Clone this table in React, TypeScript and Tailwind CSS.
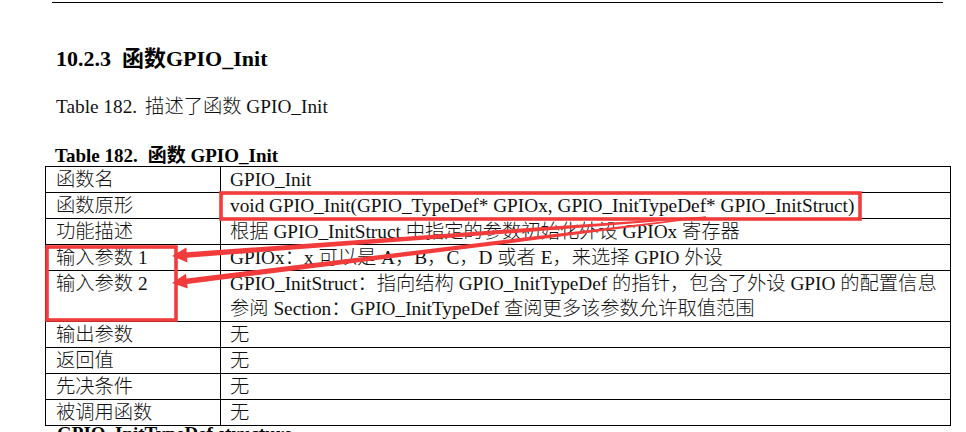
import React from 'react';

type Row = { name: string; value: React.ReactNode };

const rows: Row[] = [
  { name: '函数名', value: 'GPIO_Init' },
  { name: '函数原形', value: 'void GPIO_Init(GPIO_TypeDef* GPIOx, GPIO_InitTypeDef* GPIO_InitStruct)' },
  { name: '功能描述', value: '根据 GPIO_InitStruct 中指定的参数初始化外设 GPIOx 寄存器' },
  { name: '输入参数 1', value: 'GPIOx：x 可以是 A，B，C，D 或者 E，来选择 GPIO 外设' },
  {
    name: '输入参数 2',
    value: (
      <>
        GPIO_InitStruct：指向结构 GPIO_InitTypeDef 的指针，包含了外设 GPIO 的配置信息
        <br />
        参阅 Section：GPIO_InitTypeDef 查阅更多该参数允许取值范围
      </>
    ),
  },
  { name: '输出参数', value: '无' },
  { name: '返回值', value: '无' },
  { name: '先决条件', value: '无' },
  { name: '被调用函数', value: '无' },
];

// tapered arrow: thick near the head, thin at the tail
function arrowPoints(tx: number, ty: number, hx: number, hy: number) {
  const dx = hx - tx;
  const dy = hy - ty;
  const len = Math.hypot(dx, dy);
  const ux = dx / len;
  const uy = dy / len;
  const nx = -uy;
  const ny = ux;
  const headLen = 15;
  const headW = 15;
  const bx = hx - ux * headLen;
  const by = hy - uy * headLen;
  const stops: [number, number][] = [
    [0, 0.8],
    [0.35, 3.8],
    [1, 5.5],
  ];
  const along = (t: number): [number, number] => [tx + (bx - tx) * t, ty + (by - ty) * t];
  const left: string[] = [];
  const right: string[] = [];
  stops.forEach(([t, w]) => {
    const [px, py] = along(t);
    left.push(`${px + (nx * w) / 2},${py + (ny * w) / 2}`);
    right.unshift(`${px - (nx * w) / 2},${py - (ny * w) / 2}`);
  });
  const head = [
    `${bx + (nx * headW) / 2},${by + (ny * headW) / 2}`,
    `${hx},${hy}`,
    `${bx - (nx * headW) / 2},${by - (ny * headW) / 2}`,
  ];
  return [...left, ...head, ...right].join(' ');
}

const RED = '#f23b3b';

const App: React.FC = () => {
  return (
    <div className="relative w-[966px] h-[432px] overflow-hidden bg-white text-black font-['Liberation_Serif','Noto_Sans_CJK_SC',serif]">
      <div className="mt-[2px] ml-[52px] w-[891px] h-px bg-black" />

      <h2 className="mt-[45px] ml-[56px] text-[22px] leading-[22px] font-bold whitespace-nowrap">
        10.2.3<span className="ml-[11px]">函数GPIO_Init</span>
      </h2>

      <p className="mt-[27px] ml-[56px] text-[19.3px] leading-[19px] font-light text-[#111] whitespace-nowrap">
        Table 182.<span className="ml-[8px]">描述了函数 GPIO_Init</span>
      </p>

      <p className="mt-[30px] ml-[55px] text-[19px] leading-[19px] font-bold whitespace-nowrap">
        Table 182.<span className="ml-[10px]">函数 GPIO_Init</span>
      </p>

      <div className="mt-px ml-[45px] w-[906px] border-t border-l border-r border-black text-[19.3px] leading-[25px] font-light text-[#111]">
        {rows.map((row) => (
          <div key={row.name} className="flex border-b border-black">
            <div className="w-[175px] shrink-0 border-r border-black pl-[10px] whitespace-nowrap">{row.name}</div>
            <div className="flex-1 pl-[9px] whitespace-nowrap">{row.value}</div>
          </div>
        ))}
      </div>

      <p className="ml-[57px] text-[19px] leading-[15px] font-bold whitespace-nowrap">GPIO_InitTypeDef structure</p>

      <svg className="absolute left-0 top-0 pointer-events-none" width="966" height="432" viewBox="0 0 966 432">
        <rect x="221" y="193" width="639" height="26" fill="none" stroke={RED} strokeWidth="3.6" />
        <rect x="47" y="247" width="129" height="73" fill="none" stroke={RED} strokeWidth="3.6" />
        <polygon points={arrowPoints(706, 217, 172, 256)} fill={RED} />
        <polygon points={arrowPoints(706, 217, 172, 283)} fill={RED} />
      </svg>
    </div>
  );
};

export default App;
